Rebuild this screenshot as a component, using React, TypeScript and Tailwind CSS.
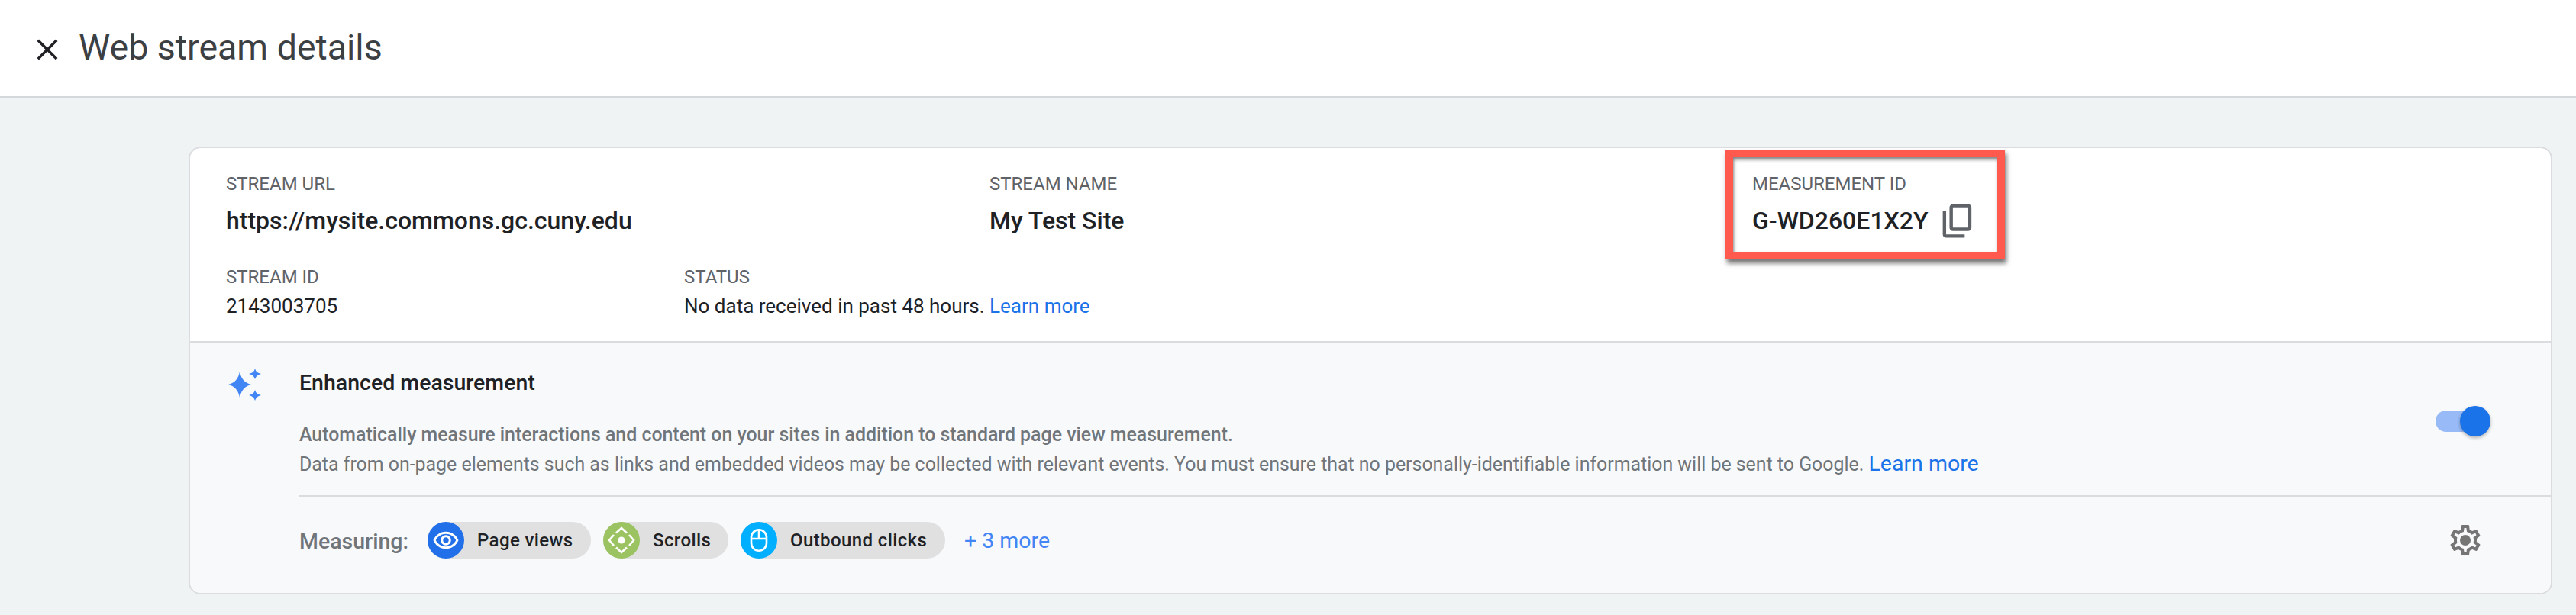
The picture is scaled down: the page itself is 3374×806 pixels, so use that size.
import React from 'react';

const Field = ({ label, value, small, children }: { label: string; value?: string; small?: boolean; children?: React.ReactNode }) => (
  <div>
    <div className="text-[24px] leading-[32px] text-[#5f6368]">{label}</div>
    {children ?? <div className={small ? 'mt-[4px] text-[26px] leading-[36px] text-[#202124]' : 'mt-[10px] text-[32px] leading-[44px] font-medium text-[#202124]'}>{value}</div>}
  </div>
);

const Chip = ({ color, label, icon, width }: { color: string; label: string; icon: React.ReactNode; width: string }) => (
  <div className={`flex h-[48px] items-center rounded-full bg-[#e0e0e0] ${width}`}>
    <div className="flex h-[48px] w-[48px] items-center justify-center rounded-full" style={{ backgroundColor: color }}>
      {icon}
    </div>
    <span className="ml-[17px] text-[24px] font-medium tracking-[0.4px] text-[#202124]">{label}</span>
  </div>
);

const EyeIcon = () => (
  <svg width="36" height="36" viewBox="0 0 24 24" fill="#fff">
    <path d="M12 4.5C7 4.5 2.73 7.61 1 12c1.730 4.390 6 7.500 11 7.500s9.270-3.110 11-7.500c-1.730-4.390-6-7.500-11-7.500zm0 13c-3.790 0-7.170-2.130-8.820-5.500C4.830 8.630 8.210 6.500 12 6.500s7.170 2.130 8.820 5.500c-1.650 3.370-5.030 5.500-8.820 5.500zm0-10c-2.480 0-4.500 2.020-4.500 4.500s2.020 4.500 4.500 4.500 4.500-2.020 4.500-4.500-2.020-4.500-4.500-4.500zm0 7c-1.380 0-2.500-1.120-2.500-2.500s1.120-2.500 2.500-2.500 2.500 1.120 2.500 2.500-1.120 2.500-2.500 2.500z" />
  </svg>
);

const ScrollIcon = () => (
  <svg width="36" height="36" viewBox="0 0 36 36" fill="none" stroke="#fff" strokeWidth="2.6">
    <circle cx="18" cy="18" r="4.5" fill="#fff" stroke="none" />
    <path d="M11 8.500 18 2l7 6.500" />
    <path d="M11 27.500 18 34l7-6.500" />
    <path d="M8 11 2 18l6 7" />
    <path d="M28 11l6 7-6 7" />
  </svg>
);

const MouseIcon = () => (
  <svg width="36" height="36" viewBox="0 0 36 36" fill="none" stroke="#fff" strokeWidth="2.6">
    <rect x="8" y="4.300" width="20" height="27.500" rx="10" />
    <path d="M8 16h20M18 4v12" />
  </svg>
);

const Sparkle = () => (
  <svg width="44" height="44" viewBox="0 0 44 44" fill="#4285f4" className="-mt-[2px]">
    <path d="M16 5Q18.500 19 31 22Q18.500 25 16 39Q13.500 25 1 22Q13.500 19 16 5Z" />
    <path d="M36 1Q37.300 6.700 44 8Q37.300 9.300 36 15Q34.700 9.300 28 8Q34.700 6.700 36 1Z" />
    <path d="M36 29Q37.300 34.700 44 36Q37.300 37.300 36 43Q34.700 37.300 28 36Q34.700 34.700 36 29Z" />
  </svg>
);

export default function App() {
  return (
    <div className="h-[806px] w-[3374px] overflow-hidden bg-[#eff3f4] font-['Roboto',sans-serif]">
      {/* Header */}
      <div className="flex h-[128px] items-center border-b-2 border-[#d5d8da] bg-white pl-[41px]">
        <svg width="42" height="42" viewBox="0 0 24 24" fill="none" stroke="#202124" strokeWidth="2" className="mt-[4px]">
          <path d="M5 5l14 14M19 5 5 19" />
        </svg>
        <h1 className="ml-[20px] text-[46.500px] font-normal text-[#3c4043]">Web stream details</h1>
      </div>

      {/* Card */}
      <div className="relative ml-[247px] mr-[31px] mt-[64px] h-[587px] rounded-[16px] border-2 border-[#dadce0] bg-white">
        <div className="h-[253px] pl-[47px] pt-[31px]">
          <div className="flex">
            <div className="w-[1000px]">
              <Field label="STREAM URL" value="https://mysite.commons.gc.cuny.edu" />
            </div>
            <div className="w-[999px]">
              <Field label="STREAM NAME" value="My Test Site" />
            </div>
            <Field label="MEASUREMENT ID">
              <div className="mt-[10px] flex h-[44px] items-center">
                <span className="text-[32px] font-medium text-[#202124]">G-WD260E1X2Y</span>
                <svg width="53" height="53" viewBox="0 0 24 24" fill="#5f6368" className="ml-[12px]">
                  <path d="M9 18q-.825 0-1.413-.588T7 16V4q0-.825.587-1.413T9 2h9q.825 0 1.413.587T20 4v12q0 .825-.588 1.413T18 18H9Zm0-2h9V4H9v12Zm-4 6q-.825 0-1.413-.588T3 20V6h2v14h11v2H5Z" />
                </svg>
              </div>
            </Field>
          </div>
          <div className="mt-[36px] flex">
            <div className="w-[600px]">
              <Field label="STREAM ID" value="2143003705" small />
            </div>
            <Field label="STATUS">
              <div className="mt-[4px] text-[26px] leading-[36px] text-[#202124]">
                No data received in past 48 hours. <span className="text-[#1a73e8]">Learn more</span>
              </div>
            </Field>
          </div>
        </div>

        {/* Enhanced measurement */}
        <div className="h-[330px] rounded-b-[14px] border-t-2 border-[#dadce0] bg-[#f8f9fb]">
          <div className="relative flex pl-[49px] pt-[35px]">
            <Sparkle />
            <div className="ml-[50px] min-w-0 flex-1">
              <div className="text-[28.500px] font-medium leading-[36px] text-[#202124]">Enhanced measurement</div>
              <div className="mt-[31px] text-[24.900px] font-medium leading-[38px] text-[#70757a]">
                Automatically measure interactions and content on your sites in addition to standard page view measurement.
              </div>
              <div className="h-[38px] text-[24.900px] leading-[38px] text-[#70757a]">
                Data from on-page elements such as links and embedded videos may be collected with relevant events. You must ensure that no personally-identifiable information will be sent to Google.{' '}
                <span className="text-[28.500px] text-[#1a73e8]">Learn more</span>
              </div>
              <div className="mt-[22px] flex h-[128px] items-center border-t-2 border-[#dadce0] pb-[12px] pr-[88px]">
                <span className="mr-[25px] mt-[4px] text-[28.500px] font-medium text-[#70757a]">Measuring:</span>
                <div className="flex gap-[16px]">
                  <Chip color="#2270e9" label="Page views" icon={<EyeIcon />} width="w-[214px]" />
                  <Chip color="#9bc362" label="Scrolls" icon={<ScrollIcon />} width="w-[164px]" />
                  <Chip color="#00afff" label="Outbound clicks" icon={<MouseIcon />} width="w-[268px]" />
                </div>
                <span className="ml-[25px] mt-[3px] text-[28.500px] text-[#4285f4]">+ 3 more</span>
                <svg width="48" height="48" viewBox="0 0 24 24" fill="#757575" className="ml-auto">
                  <path d="M19.430 12.980c.04-.32.07-.64.07-.98 0-.34-.03-.66-.07-.98l2.110-1.650c.19-.15.24-.42.12-.64l-2-3.460c-.09-.16-.26-.25-.44-.25-.06 0-.12.01-.17.03l-2.490 1c-.52-.4-1.080-.73-1.690-.98l-.38-2.650C14.460 2.180 14.250 2 14 2h-4c-.25 0-.46.18-.49.420l-.38 2.650c-.61.25-1.170.59-1.690.98l-2.490-1c-.06-.02-.12-.03-.18-.03-.17 0-.34.09-.43.25l-2 3.460c-.13.220-.07.490.12.640l2.110 1.650c-.04.32-.07.650-.07.980 0 .33.03.660.07.980l-2.110 1.650c-.19.150-.24.420-.12.640l2 3.460c.09.160.26.250.44.250.06 0 .12-.01.17-.03l2.490-1c.52.4 1.080.73 1.690.98l.38 2.650c.03.240.24.420.49.420h4c.25 0 .46-.18.49-.42l.38-2.650c.61-.25 1.170-.59 1.690-.98l2.490 1c.06.020.12.030.18.030.17 0 .34-.09.430-.25l2-3.460c.12-.22.070-.49-.12-.64l-2.110-1.650zm-1.980-1.710c.04.310.05.520.05.730 0 .21-.02.430-.05.730l-.14 1.130.89.700 1.080.840-.7 1.210-1.270-.51-1.040-.42-.9.680c-.43.320-.84.560-1.250.730l-1.060.430-.16 1.130-.2 1.350h-1.400l-.19-1.350-.16-1.130-1.060-.43c-.43-.18-.83-.41-1.230-.71l-.91-.7-1.060.430-1.270.51-.7-1.210 1.080-.84.890-.7-.14-1.130c-.03-.31-.05-.54-.05-.74s.02-.43.05-.73l.14-1.130-.89-.7-1.080-.84.7-1.210 1.270.51 1.040.42.9-.68c.43-.32.84-.56 1.250-.73l1.060-.43.16-1.130.2-1.350h1.390l.19 1.350.16 1.130 1.060.43c.43.18.83.41 1.230.71l.91.7 1.060-.43 1.270-.51.7 1.210-1.070.85-.89.7.14 1.130z" />
                  <circle cx="12" cy="12" r="3.500" />
                </svg>
              </div>
            </div>

            {/* Toggle */}
            <div className="absolute right-[87px] top-[89px] h-[28px] w-[64px] rounded-full bg-[#98bbf8]">
              <div className="absolute -top-[6px] right-[-8px] h-[40px] w-[40px] rounded-full bg-[#1a73e8] shadow-[0_2px_4px_rgba(0,0,0,0.3)]" />
            </div>
          </div>
        </div>

        {/* Annotation box */}
        <div className="absolute left-[2011px] top-[2px] h-[144px] w-[366px] border-[10px] border-[#ff5a4d] shadow-[2px_5px_6px_rgba(0,0,0,0.55),inset_1px_3px_4px_rgba(0,0,0,0.5)]" />
      </div>
    </div>
  );
}
